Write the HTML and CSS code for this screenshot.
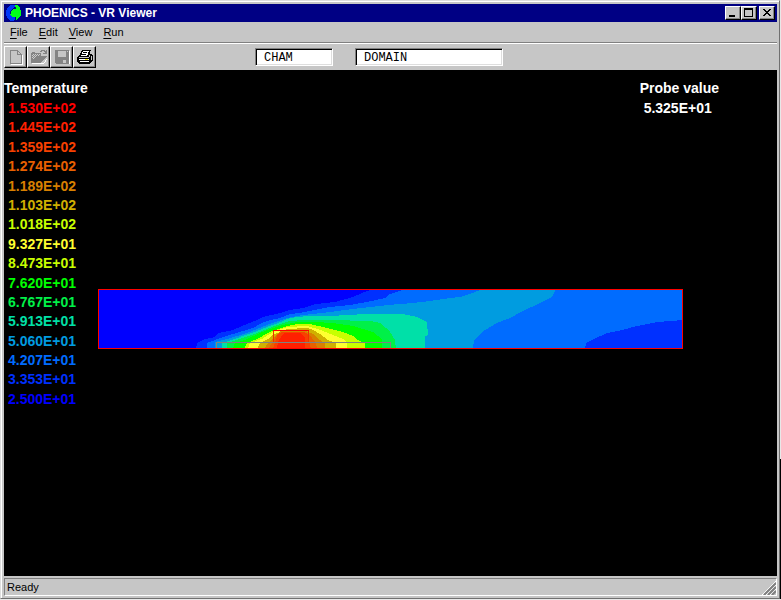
FILE: index.html
```html
<!DOCTYPE html>
<html lang="en">
<head>
<meta charset="utf-8">
<title>PHOENICS - VR Viewer</title>
<link rel="stylesheet" href="styles.css">
</head>
<body>
<div class="window">
  <header class="titlebar">
    <svg class="logo" viewBox="0 0 16 16" shape-rendering="crispEdges" aria-hidden="true">
      <path fill="#0038f8" d="M5 0H9V2L6 4L4 6V10L6 12H9V14L8 16H5L3 15L1 12L0 10V6L1 4L3 1z"/>
      <path fill="#00ff18" d="M9 0H11L14 3L15 6V10L13 13L10 15V12H7L4 10V9H5V6L7 4H9L10 3z"/>
    </svg>
    <h1>PHOENICS - VR Viewer</h1>
    <div class="controls">
      <button type="button" class="raised" aria-label="Minimize"><svg viewBox="0 0 12 10"><path d="M2 7h6v2H2z"/></svg></button>
      <button type="button" class="raised" aria-label="Maximize"><svg viewBox="0 0 12 10"><path fill-rule="evenodd" d="M1 0h9v9H1zM2 2v6h7V2z"/></svg></button>
      <button type="button" class="raised close" aria-label="Close"><svg viewBox="0 0 12 10"><path d="M2 1h2v1h1v1h2V2h1V1h2v1H9v1H8v1H7v1h1v1h1v1h1v1H8V7H7V6H5v1H4v1H2V7h1V6h1V5h1V4H4V3H3V2H2z"/></svg></button>
    </div>
  </header>
  <nav class="menu">
    <a href="#file"><u>F</u>ile</a>
    <a href="#edit"><u>E</u>dit</a>
    <a href="#view"><u>V</u>iew</a>
    <a href="#run"><u>R</u>un</a>
  </nav>
  <div class="toolbar">
    <div class="tools">
      <button type="button" class="raised" aria-label="New"><svg viewBox="0 0 16 16"><path fill="none" stroke="#fff" d="M3 15.500h11.500v-10"/><path fill="none" stroke="#848484" d="M2.500 1.500h7l4 4v9h-11zM9.500 1.500v4h4"/></svg></button>
      <button type="button" class="raised" aria-label="Open"><svg viewBox="0 0 16 16"><path fill="#fff" d="M1 14h12l4-7v2l-4 6H1z"/><path fill="#848484" d="M0 4h1V3h3v1h6v3h6v1h-1v1h-1v1h-1v1h-1v1h-1v1h-1v1H0z"/><path fill="none" stroke="#848484" d="M9 2.500h1v-1h3v1h1v1M12 4.500h3.500V1"/><path stroke="#ccc" stroke-dasharray="1 1" d="M2 5.500h7M1 6.500h8M2 7.500h3M1 8.500h3M2 9.500h1"/></svg></button>
      <button type="button" class="raised" aria-label="Save"><svg viewBox="0 0 16 16"><path fill="#fff" d="M2 15h14V2h-1v12H2z"/><path fill="#848484" d="M1 1h14v14H2l-1-1z"/><path fill="#c6c6c6" d="M4 2h8v6H4zM13 2h1v1h-1zM9 11h3v3H9z"/></svg></button>
      <button type="button" class="raised" aria-label="Print"><svg viewBox="0 0 16 16"><path d="M5 1h9v1h-1v3h2v1h1v6h-1v1h-1v1h-1v1H2v-1H1v-1H0V8h1V7h1V6h1V4h1V2h1z"/><path fill="#fff" d="M6 2h6l-2 5H4zM2 10h10v1H2zM3 12h9v1H3z"/><path stroke="#000" d="M6 3.500h4M5 5.500h4"/><path stroke="#c6c6c6" d="M2 8.500h10M12.500 6v2M14.500 7v4"/><path stroke="#f8f000" d="M8 10.500h3"/></svg></button>
    </div>
    <input class="field user" aria-label="User" value="CHAM">
    <input class="field object" aria-label="Object" value="DOMAIN">
  </div>
  <main class="view">
    <section class="legend">
      <h2>Temperature</h2>
      <ul>
        <li class="t16">1.530E+02</li>
        <li class="t15">1.445E+02</li>
        <li class="t14">1.359E+02</li>
        <li class="t13">1.274E+02</li>
        <li class="t12">1.189E+02</li>
        <li class="t11">1.103E+02</li>
        <li class="t10">1.018E+02</li>
        <li class="t9">9.327E+01</li>
        <li class="t8">8.473E+01</li>
        <li class="t7">7.620E+01</li>
        <li class="t6">6.767E+01</li>
        <li class="t5">5.913E+01</li>
        <li class="t4">5.060E+01</li>
        <li class="t3">4.207E+01</li>
        <li class="t2">3.353E+01</li>
        <li class="t1">2.500E+01</li>
      </ul>
    </section>
    <section class="probe">
      <h2>Probe value</h2>
      <output>5.325E+01</output>
    </section>
    <svg class="plot" viewBox="0 0 585 60" shape-rendering="crispEdges" role="img" aria-label="Temperature contours">
      <path fill="#0000ff" d="M0 0H585V60H0z"/>
      <path fill="#0030ff" d="M98 60L99 54L107 50L117 48L120 44L135 41L149 35L159 31L165 28L182 24L192 21L205 19L218 15L237 13L255 8L264 4L275 0H585V60z"/>
      <path fill="#006cff" d="M109 60V54L117 51L122 49L135 45L145 42L155 39L164 34L172 31L182 29L192 25L202 24L216 21L232 18L252 16L269 13L287 9L292 5L307 0H585V31L559 33L539 37L524 41L509 44L494 51L488 54L487 60z"/>
      <path fill="#009ce0" d="M117 60V53L129 50L139 47L154 42L164 38L174 34L189 29L205 26L232 23L255 20L272 18L290 16L315 14L332 12L352 9L362 8L375 4L384 0H458L454 8L442 14L425 22L412 29L399 34L384 43L380 48L376 51L375 60z"/>
      <path fill="#00e0a8" d="M124 60V54L130 52L142 48L159 42L169 38L180 34L192 29L209 27L232 27L249 26L269 25H305L319 28L329 33L330 46L327 47V60z"/>
      <path fill="#00f048" d="M129 60V54L142 50L159 44L169 40L182 35L192 32L205 31L232 31L272 32L282 34L288 39L292 43L297 51L298 60z"/>
      <path fill="#00ff00" d="M135 60L137 54L149 50L162 44L172 40L185 36L199 33H216L235 34L255 37L275 43L284 50V60z"/>
      <path fill="#c8ff00" d="M146 60L149 54L159 50L172 43L189 37L199 35H212L229 39L245 43L255 47L260 51L267 54V60z"/>
      <path fill="#ffff30" d="M150 60L152 54L164 50L175 43L189 38L209 37L216 39L225 42L235 46L245 50L249 54V60z"/>
      <path fill="#d0b000" d="M159 60L162 54L170 50L175 46L189 40L209 39L215 41L222 45L230 51L238 54V60z"/>
      <path fill="#d88000" d="M166 60L170 54L175 49L182 42H208L215 45L222 51L227 54V60z"/>
      <path fill="#e86000" d="M170 60L175 53L179 45H211L217 53L220 60z"/>
      <path fill="#f84000" d="M175 60L177 53L180 45L184 43H206L210 45L213 60z"/>
      <path fill="#ff2000" d="M179 60L180 53L184 46L187 44H203L207 49V60z"/>
      <path fill="none" stroke="#808080" d="M118.500 60V53.500H292.500V60"/>
      <path fill="none" stroke="#f03000" d="M175.500 53V41.500H210.500V53"/>
      <path stroke="#ff0000" d="M175 41.500H211"/>
      <path fill="none" stroke="#ff0000" d="M.5.5H584.500V59.500H.5z"/>
    </svg>
  </main>
  <footer class="status">
    <span>Ready</span>
    <svg class="grip" viewBox="0 0 14 14" aria-hidden="true"><path stroke="#fff" d="M0 14L14 0M4 14L14 4M8 14L14 8"/><path stroke="#808080" stroke-width="2" d="M2 14L14 2M6 14L14 6M10 14L14 10"/></svg>
  </footer>
</div>
</body>
</html>
```
FILE: styles.css
```css
* {
  box-sizing: border-box;
}

body {
  margin: 0;
  padding-right: 1px;
  background: linear-gradient(#e8e8e8 459px, #000 459px);
  font: 11px/16px "Liberation Sans", Arial, sans-serif;
  color: #000;
}

h1, h2, ul {
  margin: 0;
  padding: 0;
}

svg {
  display: block;
}

.window {
  display: flex;
  flex-direction: column;
  height: calc(100vh - 1px);
  padding: 3px 2px 2px 3px;
  border: 1px solid;
  border-color: #dedede #707070 #707070 #dedede;
  background: #c6c6c6;
  box-shadow: inset 1px 1px #fff, 0 1px #000;
}

.titlebar {
  display: flex;
  align-items: center;
  height: 18px;
  padding: 0 2px;
  background: #000084;
  color: #fff;
}

.logo {
  width: 16px;
  height: 16px;
  margin-right: 3px;
}

.titlebar h1 {
  flex: 1;
  font-size: 12px;
  line-height: 18px;
}

.controls {
  display: flex;
}

.raised {
  display: grid;
  place-items: center;
  padding: 0;
  border: 1px solid;
  border-color: #fff #000 #000 #fff;
  border-radius: 0;
  background: #c6c6c6;
  box-shadow: inset -1px -1px #848484;
}

.raised svg {
  shape-rendering: crispEdges;
}

.controls .raised {
  width: 16px;
  height: 14px;
}

.controls svg {
  width: 12px;
  height: 10px;
}

.controls .close {
  margin-left: 2px;
}

.menu {
  display: flex;
  gap: 11px;
  height: 21px;
  padding: 2px 6px;
  border-bottom: 1px solid #808080;
}

.menu a {
  color: inherit;
  text-decoration: none;
}

.menu u {
  text-underline-offset: 2px;
}

.toolbar {
  display: flex;
  align-items: flex-start;
  height: 27px;
  padding-top: 2px;
  border-top: 1px solid #fff;
}

.tools {
  display: flex;
  width: 251px;
}

.tools .raised {
  width: 23px;
  height: 22px;
}

.tools svg {
  width: 16px;
  height: 16px;
}

.field {
  height: 18px;
  margin-top: 2px;
  padding: 2px 8px 0;
  border: 1px solid;
  border-color: #808080 #fff #fff #808080;
  border-radius: 0;
  background: #fff;
  box-shadow: inset 1px 1px #000, inset -1px -1px #dedede;
  font: 12px/14px "Liberation Mono", "Courier New", monospace;
  color: #000;
}

.user {
  width: 78px;
}

.object {
  width: 148px;
  margin-left: 22px;
}

.view {
  display: grid;
  grid-template: auto 1fr / 94px 1fr 94px;
  flex: 1;
  padding-top: 8px;
  background: #000;
  color: #fff;
  font-size: 14px;
  font-weight: bold;
  line-height: 20px;
}

.view h2 {
  font-size: inherit;
}

.legend {
  grid-area: 1 / 1 / 3 / 2;
}

.legend ul {
  display: flex;
  flex-direction: column;
  justify-content: space-between;
  height: 311px;
  padding: 2px 0 2px 4px;
  line-height: 16px;
  list-style: none;
}

.probe {
  grid-area: 1 / 2 / 2 / 4;
  justify-self: end;
  margin-right: 58px;
}

.probe output {
  display: block;
  padding-left: 4px;
}

.plot {
  grid-area: 2 / 2 / 3 / 3;
  width: 100%;
  margin-top: 171px;
}

.t16 { color: #ff0000; }
.t15 { color: #ff2000; }
.t14 { color: #f84000; }
.t13 { color: #e86000; }
.t12 { color: #d88000; }
.t11 { color: #d0b000; }
.t10 { color: #c8ff00; }
.t9 { color: #ffff30; }
.t8 { color: #c8ff00; }
.t7 { color: #00ff00; }
.t6 { color: #00f048; }
.t5 { color: #00e0a8; }
.t4 { color: #009ce0; }
.t3 { color: #006cff; }
.t2 { color: #0030ff; }
.t1 { color: #0000ff; }

.status {
  display: flex;
  justify-content: space-between;
  align-items: flex-end;
  height: 18px;
  margin-top: 2px;
  padding-left: 2px;
  border: 1px solid;
  border-color: #808080 #fff #fff #808080;
}

.grip {
  width: 14px;
  height: 14px;
}
```
